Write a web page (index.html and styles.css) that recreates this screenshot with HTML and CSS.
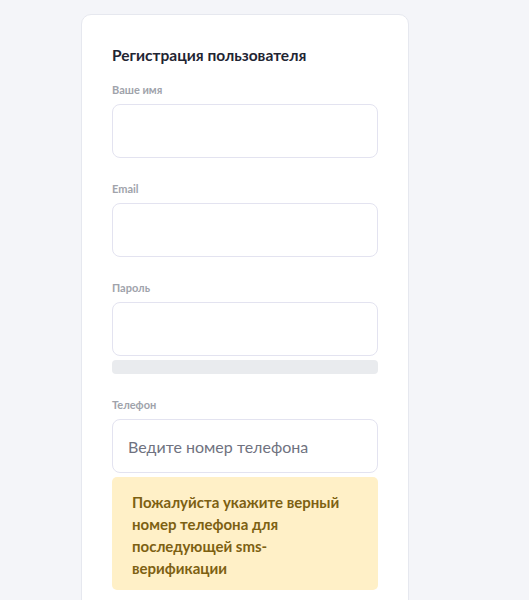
FILE: index.html
```html
<!DOCTYPE html>
<html lang="ru">
<head>
  <meta charset="UTF-8" />
  <meta name="viewport" content="width=device-width, initial-scale=1.0"/>
  <title>Регистрация пользователя</title>
  <link rel="stylesheet" href="styles.css">
</head>
<body>
  <div class="form-box">
    <h2>Регистрация пользователя</h2>
    <form id="regForm">
      <div class="field">
        <label for="name">Ваше имя</label>
        <input type="text" id="name" name="name" />
      </div>
      <div class="field">
        <label for="email">Email</label>
        <input type="email" id="email" name="email" />
      </div>
      <div class="field">
        <label for="password">Пароль</label>
        <input type="password" id="password" name="password" />
        <div class="strength"></div>
      </div>
      <div class="field">
        <label for="phone">Телефон</label>
        <input type="tel" id="phone" name="phone" placeholder="Ведите номер телефона" />
        <p class="hint">Пожалуйста укажите верный номер телефона для последующей sms-верификации</p>
      </div>
    </form>
  </div>
</body>
</html>
```

FILE: styles.css
```css
body {
  font-family: 'Lato', sans-serif;
  background: #f4f5f9;
  margin: 0;
  padding: 14px 0 0 81px;
}
.form-box {
  background: white;
  padding: 30px;
  width: 266px;
  height: 600px;
  border: 1px solid #e6e8ef;
  border-radius: 10px;
}
h2 {
  margin: 0 0 17px;
  font-size: 15.5px;
  line-height: 20px;
  color: #1f2533;
}
.field {
  margin-bottom: 23px;
}
label {
  display: block;
  font-size: 11px;
  line-height: 15px;
  font-weight: bold;
  color: #a0a3ab;
  margin-bottom: 7px;
}
input {
  display: block;
  box-sizing: border-box;
  width: 100%;
  height: 54px;
  padding: 0 15px;
  border: 1px solid #e3e3f0;
  border-radius: 8px;
  font-family: inherit;
  font-size: 16px;
  color: #1f2533;
}
input::placeholder {
  color: #6f7280;
}
.strength {
  height: 14px;
  margin-top: 4px;
  background: #e9ebee;
  border-radius: 4px;
}
.hint {
  margin: 4px 0 0;
  padding: 14px 20px 11px;
  background: #fff0c7;
  border-radius: 5px;
  color: #7d6012;
  font-size: 15px;
  line-height: 22px;
  font-weight: bold;
}
```
